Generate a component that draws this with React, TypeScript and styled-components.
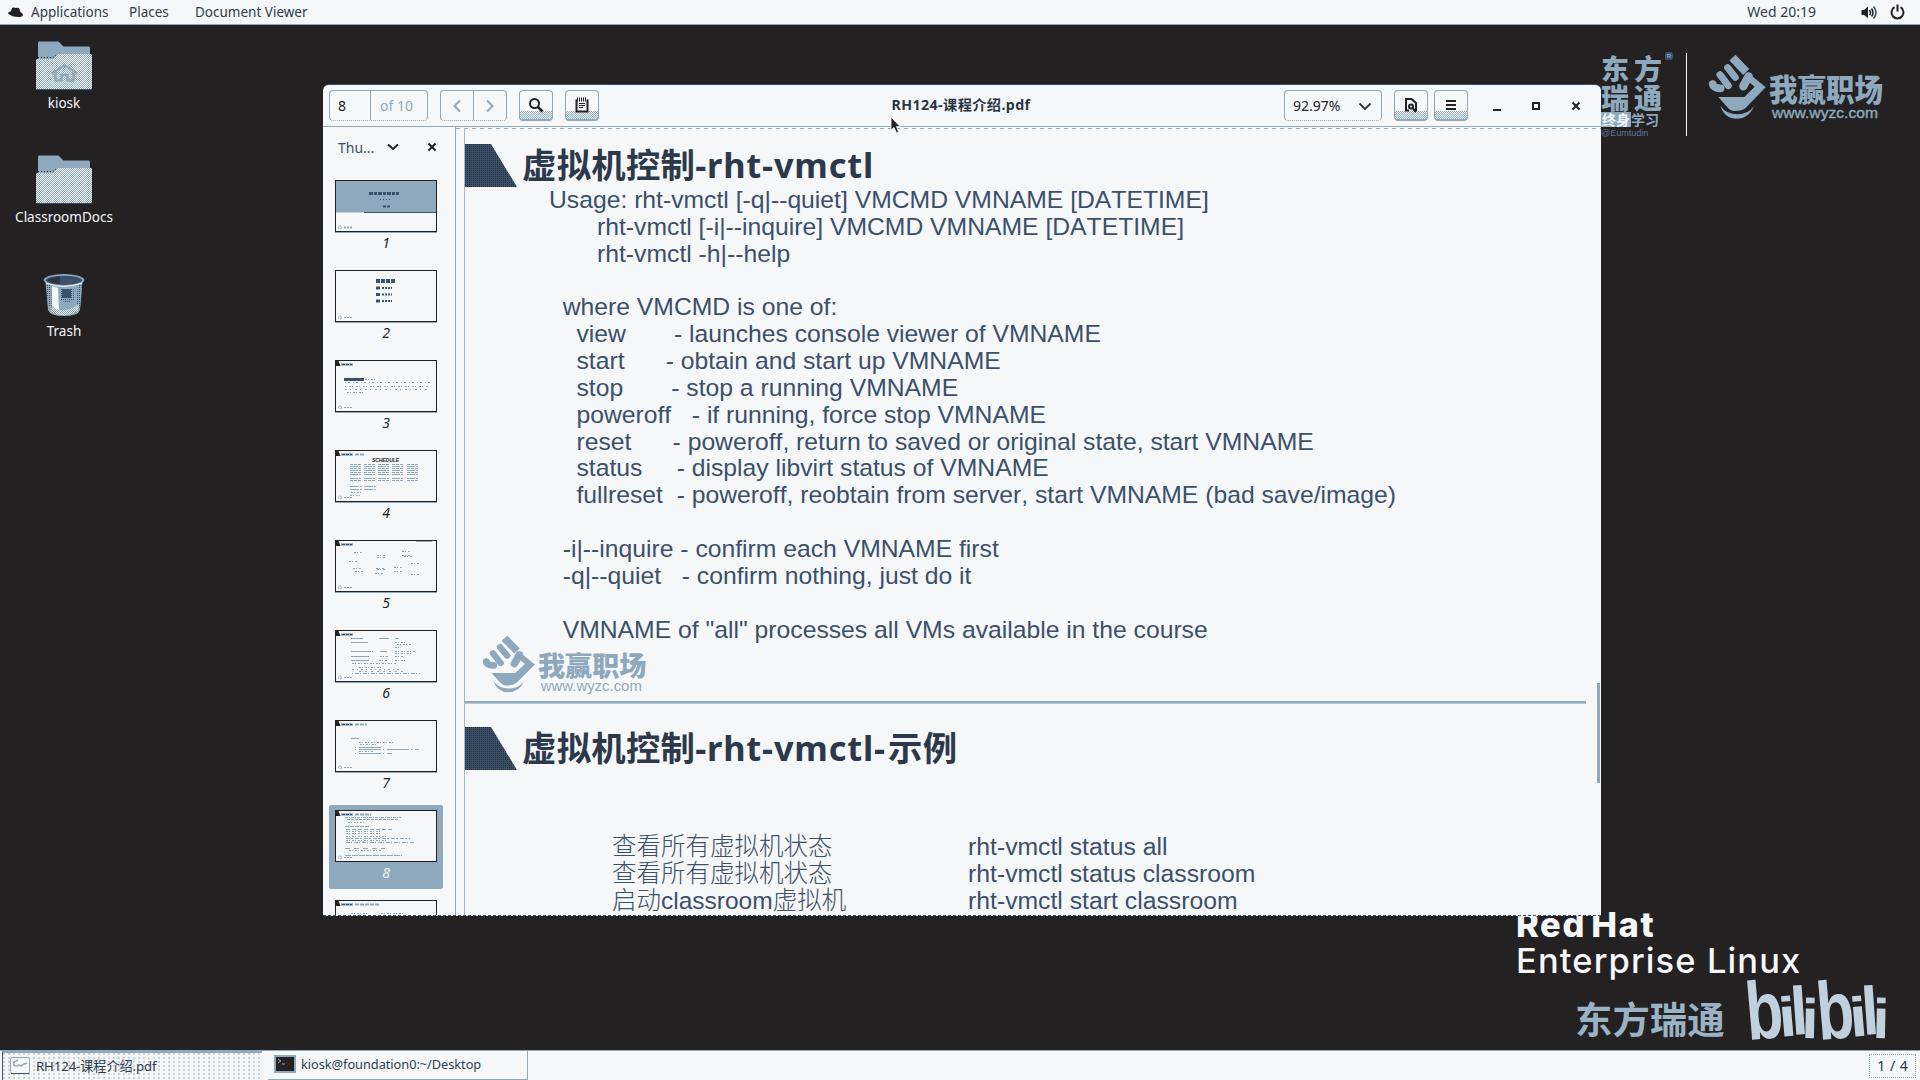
import React from "react";
import styled, { createGlobalStyle } from "styled-components";

const ink = "#232122";
const navy = "#3a506b";
const steel = "#8ea9bd";
const paper = "#f6f7f9";
const ui = `"Noto Sans", "Noto Sans CJK SC", sans-serif`;
const arial = `"Liberation Sans", "Noto Sans CJK SC", sans-serif`;
const checker = `repeating-conic-gradient(${steel} 0 25%, ${paper} 0 50%) 0 0 / 2px 2px`;

const Global = createGlobalStyle`
  html, body { margin: 0; background: ${ink}; overflow: hidden; }
  * { box-sizing: border-box; }
  svg { display: block; flex: none; }
`;

const Screen = styled.div`
  width: 1920px;
  height: 1080px;
  display: grid;
  grid-template-rows: 25px 1025px 30px;
  background: ${ink};
  font-family: ${ui};
  font-size: 13.5px;
  color: ${navy};
`;

const TopBar = styled.header`
  display: flex;
  align-items: center;
  padding: 0 15px 0 8px;
  background: ${paper};
  border-bottom: 1px solid ${steel};
  line-height: 22px;
  color: #2e3c50;
`;
const MenuLabel = styled.span<{ $gap: number; $w: number }>`
  margin-left: ${(p) => p.$gap}px;
  width: ${(p) => p.$w}px;
  white-space: nowrap;
`;
const Grow = styled.div`flex: 1;`;
const Clock = styled.span`
  font-size: 14px;
`;
const StatusIcons = styled.div`
  display: flex;
  align-items: center;
  gap: 12px;
  margin-left: 45px;
`;

const Desktop = styled.main`
  position: relative;
  overflow: hidden;
`;
const Shortcut = styled.div<{ $y: number }>`
  position: absolute;
  left: 0;
  top: ${(p) => p.$y}px;
  width: 128px;
  display: flex;
  flex-direction: column;
  align-items: center;
  color: ${paper};
  line-height: 20px;
`;
const ShortcutArt = styled.div<{ $h?: number }>`
  height: ${(p) => p.$h ?? 52}px;
`;
const Placed = styled.div<{ $x: number; $y: number }>`
  position: absolute;
  left: ${(p) => p.$x}px;
  top: ${(p) => p.$y}px;
`;

const BrandGrid = styled.div`
  width: 66px;
  display: flex;
  flex-direction: column;
  color: ${steel};
  font: 900 28px/29px "Noto Sans CJK SC", sans-serif;
  letter-spacing: 5px;
  white-space: nowrap;
`;
const BrandTag = styled.div`
  display: flex;
  height: 15px;
  font: 700 14px/14px "Noto Sans CJK SC", sans-serif;
  letter-spacing: 0;
`;
const TagBox = styled.span`
  background: ${steel};
  color: ${paper};
  width: 30px;
  text-align: center;
`;
const BrandHandle = styled.div`
  font: 9px/13px ${arial};
  letter-spacing: 0;
  color: #5d7894;
`;
const Registered = styled.div`
  width: 8px;
  height: 8px;
  border-radius: 2px;
  background: ${navy};
  color: ${steel};
  font: 700 6px/8px ${arial};
  text-align: center;
`;
const Rule = styled.div`
  width: 1px;
  height: 83px;
  background: ${paper};
`;

const RedHat = styled.div`
  font-family: Inter, sans-serif;
  font-size: 34.5px;
  line-height: 36px;
  color: ${paper};
  white-space: nowrap;
`;
const RedHatBold = styled.div`
  font-weight: 800;
  letter-spacing: 1.6px;
  word-spacing: -4px;
`;
const RedHatPlain = styled.div`
  font-weight: 500;
  letter-spacing: 1.1px;
`;
const Channel = styled.div`
  font: 700 37.4px/44px "Noto Sans CJK SC", sans-serif;
  color: #9ab2c4;
  white-space: nowrap;
`;

const Window = styled.section`
  position: absolute;
  left: 323px;
  top: 59px;
  width: 1278px;
  height: 832px;
  display: flex;
  flex-direction: column;
  background: ${paper};
  border-top: 1px solid ${navy};
  border-bottom: 1px dashed ${navy};
  border-radius: 6px 6px 0 0;
  overflow: hidden;
`;
const HeaderBar = styled.div`
  height: 42px;
  flex: none;
  display: grid;
  grid-template-columns: 1fr auto 1fr;
  padding: 5px 6px 0;
  border-bottom: 1px solid ${steel};
`;
const Side = styled.div<{ $end?: boolean }>`
  display: flex;
  height: 31px;
  justify-content: ${(p) => (p.$end ? "flex-end" : "flex-start")};
`;
const Group = styled.div<{ $w: number; $mr?: number }>`
  display: flex;
  width: ${(p) => p.$w}px;
  margin-right: ${(p) => p.$mr ?? 0}px;
  height: 31px;
  border: 1px solid ${steel};
  border-bottom-style: dotted;
  border-radius: 4px;
`;
const Cell = styled.div<{ $w?: number; $line?: boolean; $pad?: number; $c?: string }>`
  display: flex;
  align-items: center;
  ${(p) => (p.$w ? `width: ${p.$w}px;` : "flex: 1;")}
  ${(p) => (p.$line ? `border-right: 1px solid ${steel};` : "")}
  ${(p) => (p.$pad ? `padding-left: ${p.$pad}px;` : "justify-content: center;")}
  color: ${(p) => p.$c ?? ink};
  font-size: 14px;
  white-space: nowrap;
`;
const ToolButton = styled.div<{ $mr: number }>`
  width: 34px;
  height: 31px;
  margin-right: ${(p) => p.$mr}px;
  display: flex;
  align-items: center;
  justify-content: center;
  border: 1px solid ${steel};
  border-bottom-width: 2px;
  border-radius: 4px;
  background: linear-gradient(${paper} 0 72%, transparent 72%), ${checker};
`;
const Title = styled.div`
  font-weight: 700;
  font-size: 14.2px;
  letter-spacing: 0.4px;
  line-height: 30px;
  margin-left: -2px;
  color: #2a3444;
  white-space: nowrap;
`;
const Controls = styled.div`
  display: flex;
  align-items: center;
  width: 127px;
  padding-left: 10px;
`;
const ControlSlot = styled.div<{ $w: number }>`
  width: ${(p) => p.$w}px;
  display: flex;
  justify-content: center;
`;

const Body = styled.div`
  flex: 1;
  min-height: 0;
  display: grid;
  grid-template-columns: 133px 1fr;
`;
const Sidebar = styled.aside`
  border-right: 1px solid ${steel};
  overflow: hidden;
  display: flex;
  flex-direction: column;
`;
const SideHead = styled.div`
  height: 48px;
  flex: none;
  display: flex;
  align-items: center;
  padding: 0 16px 8px 15px;
  font-size: 14px;
`;
const SideName = styled.span`
  width: 48px;
  flex: none;
`;
const SideClose = styled.div`
  margin-left: auto;
`;
const Thumb = styled.div<{ $on?: boolean }>`
  flex: none;
  width: 114px;
  height: 84px;
  margin: 0 0 6px 6px;
  padding-top: 5px;
  display: flex;
  flex-direction: column;
  align-items: center;
  border-radius: 2px;
  background: ${(p) => (p.$on ? steel : "transparent")};
  color: ${(p) => (p.$on ? paper : ink)};
  font-style: italic;
  font-size: 14px;
  line-height: 20px;
`;

const Viewport = styled.div`
  position: relative;
  overflow: hidden;
  padding: 1px 0 0 8px;
  background: repeating-linear-gradient(90deg, ${steel} 0 4px, transparent 4px 8px) 0 1px / 100% 1px no-repeat;
`;
const Slide = styled.article<{ $h: number; $top: number }>`
  height: ${(p) => p.$h}px;
  padding-top: ${(p) => p.$top}px;
  border-left: 1px solid #a3b9c9;
  position: relative;
`;
const SlideHead = styled.div`
  height: 43px;
  display: flex;
  align-items: flex-start;
`;
const SlideTitle = styled.h1`
  margin: 0 0 0 5px;
  font: 700 34.4px/41px "Noto Sans", "Noto Sans CJK SC", sans-serif;
  letter-spacing: 0.25px;
  color: #2c394b;
  white-space: nowrap;
`;
const Latin = styled.span`
  letter-spacing: 0.8px;
`;
const LastDash = styled.span`
  letter-spacing: 3px;
`;
const Code = styled.pre`
  margin: 0 0 0 84px;
  font: 24.71px/26.84px ${arial};
  font-kerning: none;
  font-variant-ligatures: none;
  color: ${navy};
`;
const PageEdge = styled.div`
  width: 1122px;
  height: 3px;
  background: linear-gradient(${steel} 0 2px, #b9c9d6 2px);
`;
const Examples = styled.div`
  margin: 64px 0 0 147px;
  display: grid;
  grid-template-columns: 356px auto;
  justify-content: start;
  font: 24.75px/26.86px ${arial};
  font-kerning: none;
  color: ${navy};
  white-space: nowrap;
`;
const Zh = styled.span`
  font-weight: 300;
  font-size: 24.5px;
`;
const ScrollThumb = styled.div`
  position: absolute;
  right: 1px;
  top: 556px;
  width: 3px;
  height: 100px;
  background: ${steel};
`;

const TaskBar = styled.footer`
  display: flex;
  background: ${paper};
  border-top: 1px solid ${steel};
  padding: 0 4px 0 2px;
`;
const Task = styled.div<{ $active?: boolean }>`
  width: 260px;
  height: 29px;
  margin-right: 6px;
  display: flex;
  align-items: center;
  padding: 0 0 2px 7px;
  color: #2e3c50;
  white-space: nowrap;
  ${(p) =>
    p.$active
      ? `border-top: 2px solid ${steel}; border-left: 1px solid ${navy}; font-size: 13.2px;
         background: radial-gradient(circle at 1px 1px, ${steel} 0.6px, transparent 0.8px) 0 0 / 5px 4px;`
      : `border-right: 1px solid ${steel}; border-bottom: 1px solid ${steel}; font-size: 12.8px; padding-left: 6px;`}
`;
const TaskText = styled.span<{ $gap: number; $ls: number }>`
  margin-left: ${(p) => p.$gap}px;
  letter-spacing: ${(p) => p.$ls}px;
`;
const Pager = styled.div`
  width: 47px;
  height: 24px;
  margin-top: 3px;
  border: 1px dotted ${steel};
  text-align: center;
  line-height: 21px;
  font-size: 14px;
  word-spacing: 1px;
  color: #2a3444;
`;

const Defs = () => (
  <svg width="0" height="0" style={{ position: "absolute" }}>
    <defs>
      <pattern id="weave" width="2" height="2" patternUnits="userSpaceOnUse">
        <rect width="2" height="2" fill={paper} />
        <rect width="1" height="1" fill={steel} />
        <rect x="1" y="1" width="1" height="1" fill={steel} />
      </pattern>
      <pattern id="dense" width="2" height="2" patternUnits="userSpaceOnUse">
        <rect width="2" height="2" fill={navy} />
        <rect width="1" height="1" fill="#26292f" />
      </pattern>
      <pattern id="metal" width="2" height="2" patternUnits="userSpaceOnUse">
        <rect width="2" height="2" fill={steel} />
        <rect width="1" height="1" fill={navy} />
      </pattern>
    </defs>
  </svg>
);

const Folder = ({ home }: { home?: boolean }) => (
  <svg width="56" height="50" viewBox="0 0 56 50">
    <path d="M2 1.500 3 .5H22.500L27.500 5.500H53Q54 5.500 54 7V30H2Z" fill={steel} />
    <path d="M0 19Q0 18 1 18H17L21.500 13H55Q56 13 56 14V47.500Q56 48.500 55 48.500H1Q0 48.500 0 47.500Z" fill="url(#weave)" />
    <path d="M2 16.500H17L20 14" stroke={ink} strokeDasharray="1 2" fill="none" />
    <path d="M0 48.500H56" stroke={navy} />
    {home && (
      <>
        <path d="M15.500 32.500 28.500 24.500 41.500 32.500" stroke={steel} strokeWidth="2.600" fill="none" />
        <path d="M19.500 31V39.500H25.500V34H31.500V39.500H37.500V31" stroke={steel} strokeWidth="2.600" fill="none" />
      </>
    )}
  </svg>
);

const Bin = () => (
  <svg width="42" height="44" viewBox="0 0 42 44">
    <path d="M2.500 9 5 37Q7 43 21 43T37 37L39.500 9Z" fill={steel} />
    <path d="M3 10 5 30 9 38 8 12Z" fill="url(#metal)" />
    <path d="M17 15H32L31 27 24 30 17 27Z" fill="url(#metal)" />
    <path d="M19 16H28V25H19Z" fill={navy} />
    <path d="M35 12H39L37 35 33 33Z" fill="url(#metal)" />
    <path d="M9 13 15 15 16 40 9 38Z" fill={paper} />
    <path d="M9 33Q20 42 36 31L35 38Q21 46 8 39Z" fill="url(#weave)" />
    <ellipse cx="21" cy="7" rx="20.300" ry="6" fill={steel} />
    <ellipse cx="21" cy="7.300" rx="18" ry="4.600" fill={navy} />
    <path d="M4 7Q10 3.500 17 3.500V11Q9 11 4 7Z" fill="#2b3442" />
    <path d="M3 10Q20 17 39 10" stroke={paper} fill="none" />
  </svg>
);

const FistShape = () => (
  <g fill="none" stroke={steel} strokeLinejoin="round">
    <path d="M82 17 106 42" strokeWidth="25" strokeLinecap="square" />
    <path d="M59 38 82 67" strokeWidth="21" strokeLinecap="round" />
    <path d="M36 59 61 92" strokeWidth="21" strokeLinecap="round" />
    <path d="M14 87Q16 99 38 100" strokeWidth="23" strokeLinecap="round" />
    <path d="M122 64 106 94" strokeWidth="25" strokeLinecap="round" />
    <path d="M124 56 173 97 112 160Q100 169 76 168 68 168 60 159L31 126H109L140 95 112 72Z" fill={steel} stroke="none" />
    <path d="M37 153Q55 178 88 178T138 153Q122 191 86 191T37 153Z" fill={steel} stroke="none" />
  </g>
);

const Wyzc = ({ bold }: { bold?: boolean }) => (
  <svg width={bold ? 184 : 169} height={bold ? 70 : 62} viewBox="0 0 184 70" preserveAspectRatio="none">
    <g transform="translate(0 1) scale(0.3333)"><FistShape /></g>
    <g fill={steel}>
      <text
        x="61" y="46.500" textLength={bold ? 114 : 118} lengthAdjust="spacingAndGlyphs"
        fontFamily="Noto Sans CJK SC, sans-serif" fontWeight="900" fontSize="31"
      >我赢职场</text>
      <text
        x="64" y="63.500" textLength={bold ? 106 : 110} lengthAdjust="spacingAndGlyphs"
        fontFamily="Liberation Sans, sans-serif" fontSize="15.500"
        stroke={bold ? steel : "none"} strokeWidth="0.400"
      >www.wyzc.com</text>
    </g>
  </svg>
);

/* letter, x, baseline, horizontal scale, vertical scale, tilt */
const biliLetters: [string, number, number, number, number, number][] = [
  ["b", 4, 61, 1.22, 1.64, -5],
  ["i", 36, 58, 1.3, 1.12, -5],
  ["l", 48, 56, 1.25, 1.36, -4],
  ["i", 57, 59, 1.25, 1.12, 1],
];
const BiliArt = styled.svg`
  overflow: visible;
  font: 700 50px "Liberation Sans", sans-serif;
  fill: #c0d0dc;
`;
const Bilibili = () => (
  <BiliArt width="146" height="66" viewBox="0 0 146 66">
    {[0, 71].map((dx) =>
      biliLetters.map(([ch, x, y, sx, sy, r], i) => (
        <text key={`${dx}-${i}`} transform={`translate(${x + dx} ${y}) rotate(${r}) scale(${sx} ${sy})`}>{ch}</text>
      )),
    )}
  </BiliArt>
);

const Wedge = () => (
  <svg width="52" height="43"><path d="M0 0H26L52 43H0Z" fill="url(#dense)" /></svg>
);

const Chevron = ({ d, c = steel, s = 2 }: { d: string; c?: string; s?: number }) => (
  <svg width="14" height="14" viewBox="0 0 14 14"><path d={d} fill="none" stroke={c} strokeWidth={s} /></svg>
);
const Cross = () => <Chevron d="M3.500 3.500 10.500 10.500M10.500 3.500 3.500 10.500" c={ink} />;

/* Each row: x, y, length, stroke, dash pattern, width */
type Row = [number, number, number, string, string, number];
const heading = (n: number): Row[] => [
  [6, 4.500, 12, steel, "", 2.5],
  [7, 4.500, 10, navy, "3 1", 1],
  ...(n > 18 ? ([[20, 4.500, n - 20, steel, "4 1", 2]] as Row[]) : []),
];
const dots = (x: number, y: number, n: number, d = "2 1 1 2"): Row => [x, y, n, steel, d, 1];
const thumbs: Row[][] = [
  [[34, 13.500, 30, navy, "4 1 3 1", 3], [45, 19.500, 12, navy, "1 2", 1], [48, 26.500, 8, navy, "3 1", 2], [29, 32.500, 72, navy, "", 1]],
  [[41, 11, 20, navy, "4 1", 4], [41, 18, 4, navy, "", 3], [47, 18, 10, navy, "2 1", 2], [41, 24.500, 4, navy, "", 3], [47, 24.500, 10, navy, "2 1", 2], [41, 31, 4, navy, "", 3], [47, 31, 10, navy, "2 1", 2]],
  [...heading(18), [9, 19.500, 20, navy, "", 3], dots(30, 19.500, 12), dots(10, 22.500, 86, "1 2 2 3"), dots(10, 26.500, 84, "1 3 2 1"), dots(10, 29.500, 84, "2 3 1 4"), dots(12, 32.500, 16)],
  [...heading(30), ...[14, 16, 18, 20, 22, 24, 28, 30].flatMap((y) => [15, 29, 43, 57, 72].map((x) => dots(x, y + 0.500, 11, y % 4 ? "3 1" : "8 1 2 1"))), ...[36, 39].flatMap((y) => [dots(15, y + 0.500, 12, "9 1"), dots(29, y + 0.500, 12, "9 1")]), dots(16, 42.500, 11), dots(15, 45.500, 12)],
  [...heading(18), [81, 1.500, 16, steel, "", 1], ...([[19, 12], [42, 15], [42, 17], [67, 11], [67, 15], [69, 16], [14, 21], [18, 28], [20, 31], [41, 28], [42, 29], [40, 33], [59, 27], [59, 31], [76, 23], [76, 34]] as number[][]).map(([x, y]) => dots(x, y + 0.500, 8))],
  [...heading(18), dots(16, 8.500, 13, "12 1"), dots(44, 8.500, 11, "10 1"), dots(60, 8.500, 4, "4 1"), dots(16, 12.500, 18, "17 1"), dots(60, 12.500, 10), dots(62, 14.500, 14), dots(60, 17.500, 5), dots(16, 21.500, 22, "20 1"), dots(45, 21.500, 8, "7 1"), dots(60, 21.500, 21), dots(60, 23.500, 16), dots(16, 26.500, 19, "18 1"), dots(45, 26.500, 8), dots(60, 26.500, 8), dots(16, 30.500, 19, "18 1"), dots(44, 30.500, 8), dots(60, 30.500, 10), dots(17, 33.500, 45), dots(24, 37.500, 22), dots(17, 39.500, 50, "2 3 1 3"), dots(24, 41.500, 44, "2 4"), dots(17, 43.500, 68, "1 2 4 1")],
  [...heading(32), dots(16, 18.500, 9, "8 1"), dots(24, 22.500, 35), dots(25, 24.500, 18), dots(20, 27.500, 27, "1 3 22 1"), dots(20, 29.500, 64, "1 3 22 2"), dots(24, 31.500, 14), dots(20, 33.500, 37, "1 3 22 2")],
  [...heading(36), dots(10, 7.500, 56, "3 1 1 1"), dots(12, 9.500, 52, "3 1"), dots(13, 12.500, 16), dots(10, 16.500, 24, "4 1"), dots(11, 19.500, 46, "4 2"), dots(11, 21.500, 36), dots(11, 23.500, 34), dots(11, 26.500, 42), dots(11, 28.500, 64, "4 1 2 2"), dots(11, 30.500, 40), dots(11, 32.500, 69, "4 1 1 2"), dots(10, 38.500, 40, "5 4"), dots(14, 40.500, 32), dots(10, 45.500, 57, "6 1")],
  [...heading(44), dots(16, 13.500, 16), dots(46, 13.500, 24), dots(15, 15.500, 22), dots(48, 15.500, 24)],
];
const Mini = ({ rows, n }: { rows: Row[]; n: number }) => (
  <svg width="102" height="53" viewBox="0 0 102 53">
    <rect x="0.500" y="0.500" width="101" height="51" fill={paper} stroke={ink} />
    {n === 1 && <rect x="1" y="1" width="100" height="31.500" fill={steel} />}
    {n > 2 && <path d="M1 1H3.500L5.500 6H1Z" fill={ink} />}
    {rows.map(([x, y, len, c, dash, w], i) => (
      <path key={i} d={`M${x} ${y}h${len}`} stroke={c} strokeDasharray={dash || undefined} strokeWidth={w} />
    ))}
    {n === 4 && (
      <text x="37" y="11.500" textLength="27" fontFamily="Liberation Sans" fontWeight="700" fontSize="5" fill={ink}>SCHEDULE</text>
    )}
    <circle cx="5" cy="47.500" r="1.500" fill="none" stroke={steel} strokeDasharray="2 1" />
    <path d="M9 47.500h8" stroke={steel} strokeWidth={n === 1 ? 2 : 1} strokeDasharray="2 1" />
    <path d="M0 52.500H102" stroke={steel} />
  </svg>
);

const usage = `Usage: rht-vmctl [-q|--quiet] VMCMD VMNAME [DATETIME]
       rht-vmctl [-i|--inquire] VMCMD VMNAME [DATETIME]
       rht-vmctl -h|--help

  where VMCMD is one of:
    view       - launches console viewer of VMNAME
    start      - obtain and start up VMNAME
    stop       - stop a running VMNAME
    poweroff   - if running, force stop VMNAME
    reset      - poweroff, return to saved or original state, start VMNAME
    status     - display libvirt status of VMNAME
    fullreset  - poweroff, reobtain from server, start VMNAME (bad save/image)

  -i|--inquire - confirm each VMNAME first
  -q|--quiet   - confirm nothing, just do it

  VMNAME of "all" processes all VMs available in the course`;

const examples = [
  ["查看所有虚拟机状态", "rht-vmctl status all"],
  ["查看所有虚拟机状态", "rht-vmctl status classroom"],
  ["启动classroom虚拟机", "rht-vmctl start classroom"],
];

export default function App() {
  return (
    <Screen>
      <Global />
      <TopBar>
        <svg width="15" height="11" viewBox="0 0 15 11">
          <path d="M0 6.500Q0 4.800 2.800 4.600L4 1.200Q4.500 .2 6 .6L8 1 9.500 .8Q11 .8 11.600 2.200L12.600 5.200Q15 6.500 15 8 14.500 10 10.500 10 4 10 0 6.500Z" fill={ink} />
        </svg>
        <MenuLabel $gap={8} $w={98}>Applications</MenuLabel>
        <MenuLabel $gap={0} $w={66}>Places</MenuLabel>
        <MenuLabel $gap={0} $w={130}>Document Viewer</MenuLabel>
        <Grow />
        <Clock>Wed 20:19</Clock>
        <StatusIcons>
          <svg width="17" height="15" viewBox="0 0 17 15" fill="none" stroke={ink} strokeWidth="1.600">
            <path d="M0.500 5H3L7 1.500V13L3 10H0.500Z" fill={ink} stroke="none" />
            <path d="M8.500 5Q10.500 7.500 8.500 10M10.500 3.500Q13.500 7.500 10.500 11.500" />
            <path d="M12.500 1.500Q17.500 7.500 12.500 13.500" stroke={navy} />
          </svg>
          <svg width="15" height="16" viewBox="0 0 15 16" fill="none" stroke={ink} strokeWidth="2">
            <path d="M4.500 3.200A6 6 0 1 0 10.500 3.200M7.500 0.500V7.500" />
          </svg>
        </StatusIcons>
      </TopBar>

      <Desktop>
        <Defs />
        <Shortcut $y={16}><ShortcutArt><Folder home /></ShortcutArt>kiosk</Shortcut>
        <Shortcut $y={130}><ShortcutArt><Folder /></ShortcutArt>ClassroomDocs</Shortcut>
        <Shortcut $y={248}><ShortcutArt $h={48}><Bin /></ShortcutArt>Trash</Shortcut>

        <Placed $x={1601} $y={29}>
          <BrandGrid>
            <span>东方</span>
            <span>瑞通</span>
            <BrandTag><TagBox>终身</TagBox>学习</BrandTag>
            <BrandHandle>@Eumtudin</BrandHandle>
          </BrandGrid>
        </Placed>
        <Placed $x={1665} $y={27}><Registered>R</Registered></Placed>
        <Placed $x={1686} $y={28}><Rule /></Placed>
        <Placed $x={1708} $y={29}><Wyzc bold /></Placed>

        <Placed $x={1516} $y={882}>
          <RedHat>
            <RedHatBold>Red Hat</RedHatBold>
            <RedHatPlain>Enterprise Linux</RedHatPlain>
          </RedHat>
        </Placed>
        <Placed $x={1575} $y={971}><Channel>东方瑞通</Channel></Placed>
        <Placed $x={1744} $y={954}><Bilibili /></Placed>

        <Window>
          <HeaderBar>
            <Side>
              <Group $w={99} $mr={12}>
                <Cell $w={41} $line $pad={8}>8</Cell>
                <Cell $pad={9} $c={steel}>of 10</Cell>
              </Group>
              <Group $w={67} $mr={12}>
                <Cell $line><Chevron d="M10 1.500 4.500 7 10 12.500" /></Cell>
                <Cell><Chevron d="M4 1.500 9.500 7 4 12.500" /></Cell>
              </Group>
              <ToolButton $mr={12}>
                <svg width="16" height="16" viewBox="0 0 16 16" fill="none" stroke={ink}>
                  <circle cx="6.500" cy="6.500" r="4.500" strokeWidth="2" /><path d="M9.800 9.800 14.500 14.500" strokeWidth="2.600" />
                </svg>
              </ToolButton>
              <ToolButton $mr={0}>
                <svg width="14" height="16" viewBox="0 0 14 16" fill="none" stroke={ink}>
                  <path d="M1.500 2.500V14.500H12.500V2.500" strokeWidth="2" fill={paper} />
                  <path d="M2.500 0.500V4.500M4.500 0.500V4.500M6.500 0.500V4.500M8.500 0.500V4.500M10.500 0.500V4.500" />
                  <path d="M4 6.500H10M4 8.500H10M4 10.500H8" />
                </svg>
              </ToolButton>
            </Side>
            <Title>RH124-课程介绍.pdf</Title>
            <Side $end>
              <Group $w={98} $mr={12}>
                <Cell $w={70} $pad={8}>92.97%</Cell>
                <Cell $w={20}><Chevron d="M1.500 4.500 7 10 12.500 4.500" c="#2a3444" s={1.800} /></Cell>
              </Group>
              <ToolButton $mr={6}>
                <svg width="14" height="16" viewBox="0 0 14 16" fill="none" stroke={ink} strokeWidth="2">
                  <path d="M5 13.500H2V2H7.500L12 6V14" /><circle cx="7" cy="9.500" r="2" /><path d="M8.500 11 12 15" />
                </svg>
              </ToolButton>
              <ToolButton $mr={0}>
                <svg width="12" height="12" viewBox="0 0 12 12"><path d="M1 2H11M1 6H11M1 10H11" stroke={ink} strokeWidth="2" /></svg>
              </ToolButton>
              <Controls>
                <ControlSlot $w={40}><svg width="8" height="12"><path d="M0 10H8" stroke={ink} strokeWidth="2" /></svg></ControlSlot>
                <ControlSlot $w={41}><svg width="8" height="8"><rect x="1" y="1" width="6" height="6" fill="none" stroke={ink} strokeWidth="2" /></svg></ControlSlot>
                <ControlSlot $w={40}><Cross /></ControlSlot>
              </Controls>
            </Side>
          </HeaderBar>
          <Body>
            <Sidebar>
              <SideHead>
                <SideName>Thu...</SideName>
                <Chevron d="M2 4.500 7 9 12 4.500" c={ink} />
                <SideClose><Cross /></SideClose>
              </SideHead>
              {thumbs.map((rows, i) => (
                <Thumb key={i} $on={i === 7}><Mini rows={rows} n={i + 1} />{i < 8 ? i + 1 : ""}</Thumb>
              ))}
            </Sidebar>
            <Viewport>
              <Slide $h={573} $top={16}>
                <SlideHead><Wedge /><SlideTitle>虚拟机控制<Latin>-rht-vmctl</Latin></SlideTitle></SlideHead>
                <Code>{usage}</Code>
                <Placed $x={17} $y={507}><Wyzc /></Placed>
              </Slide>
              <PageEdge />
              <Slide $h={300} $top={23}>
                <SlideHead><Wedge /><SlideTitle>虚拟机控制<Latin>-rht-vmctl</Latin><LastDash>-</LastDash>示例</SlideTitle></SlideHead>
                <Examples>
                  {examples.map(([zh, cmd], i) => (
                    <React.Fragment key={i}><Zh>{zh}</Zh><span>{cmd}</span></React.Fragment>
                  ))}
                </Examples>
              </Slide>
              <ScrollThumb />
            </Viewport>
          </Body>
        </Window>
        <Placed $x={890} $y={91}>
          <svg width="12" height="19" viewBox="0 0 12 19">
            <path d="M1 1V14L4 11.500 6.500 17 8.500 16 6.500 10.500H10Z" fill={ink} stroke={paper} strokeWidth="0.800" />
          </svg>
        </Placed>
      </Desktop>

      <TaskBar>
        <Task $active>
          <svg width="20" height="18" viewBox="0 0 20 18">
            <rect x="0.500" y="0.500" width="19" height="16" rx="2" fill={paper} stroke={steel} />
            <path d="M1 16.500H19" stroke={navy} />
            <path d="M4 4Q2 9 7 9 9 7 11 9 13 7 17 6M4 6Q5 4 8 3" stroke={steel} strokeWidth="1.500" fill="none" />
          </svg>
          <TaskText $gap={6} $ls={-0.1}>RH124-课程介绍.pdf</TaskText>
        </Task>
        <Task>
          <svg width="22" height="18" viewBox="0 0 22 18">
            <rect width="22" height="18" fill={steel} /><rect x="2" y="2" width="18" height="14" fill={ink} />
            <path d="M4 4 7 6 4 8M8 9H11" stroke={steel} fill="none" />
          </svg>
          <TaskText $gap={5} $ls={-0.05}>kiosk@foundation0:~/Desktop</TaskText>
        </Task>
        <Grow />
        <Pager>1 / 4</Pager>
      </TaskBar>
    </Screen>
  );
}
